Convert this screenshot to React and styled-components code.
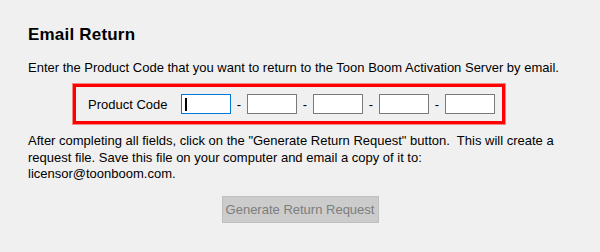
import React from "react";
import styled, { createGlobalStyle } from "styled-components";

const GlobalStyle = createGlobalStyle`
  html, body {
    margin: 0;
    padding: 0;
    background: #f0f0f0;
  }
  body {
    font-family: "Liberation Sans", Arial, sans-serif;
    color: #000;
  }
`;

const Page = styled.div`
  width: 600px;
  height: 252px;
  box-sizing: border-box;
  padding: 25px 0 0 28px;
  display: flex;
  flex-direction: column;
  align-items: flex-start;
`;

const Title = styled.h2`
  margin: 0;
  font-size: 17px;
  line-height: 20px;
  font-weight: bold;
  letter-spacing: 0.2px;
`;

const Text = styled.p`
  margin: ${({ $top }) => $top}px 0 0;
  font-size: 13px;
  line-height: ${({ $lh }) => $lh || 16}px;
  white-space: pre;
`;

const CodeBox = styled.div`
  margin: 8px 0 0 45px;
  width: 432px;
  height: 40px;
  box-sizing: border-box;
  border: 3px solid #ff0000;
  box-shadow: 0 0 0 1px rgba(255, 0, 0, 0.45);
  padding-left: 12px;
  display: flex;
  align-items: center;
`;

const Label = styled.span`
  width: 93px;
  font-size: 13px;
`;

const FieldWrap = styled.span`
  position: relative;
  display: flex;
`;

const Field = styled.input`
  width: 50px;
  height: 20px;
  box-sizing: border-box;
  margin: 0;
  padding: 0 3px;
  border: 1px solid ${({ $active }) => ($active ? "#0078d7" : "#7a7a7a")};
  background: #fff;
  outline: none;
  font: 13px "Liberation Sans", Arial, sans-serif;
`;

const Caret = styled.span`
  position: absolute;
  left: 4px;
  top: 4px;
  width: 2px;
  height: 13px;
  background: #000;
`;

const Dash = styled.span`
  width: 16px;
  text-align: center;
  font-size: 13px;
`;

const ButtonRow = styled.div`
  align-self: stretch;
  margin-left: -28px;
  margin-top: 13px;
  display: flex;
  justify-content: center;
`;

const Button = styled.button`
  width: 157px;
  height: 27px;
  box-sizing: border-box;
  background: #cccccc;
  border: 1px solid #bfbfbf;
  border-radius: 0;
  color: #7d7d7d;
  font: 13px "Liberation Sans", Arial, sans-serif;
  padding: 0;
`;

export default function App() {
  const fields = [0, 1, 2, 3, 4];
  return (
    <>
      <GlobalStyle />
      <Page>
        <Title>Email Return</Title>
        <Text $top={15}>
          Enter the Product Code that you want to return to the Toon Boom Activation Server by email.
        </Text>
        <CodeBox>
          <Label>Product Code</Label>
          {fields.map((i) => (
            <React.Fragment key={i}>
              {i > 0 && <Dash>-</Dash>}
              <FieldWrap>
                <Field $active={i === 0} readOnly />
                {i === 0 && <Caret />}
              </FieldWrap>
            </React.Fragment>
          ))}
        </CodeBox>
        <Text $top={9} $lh={16.5}>
          {'After completing all fields, click on the "Generate Return Request" button.  This will create a\nrequest file. Save this file on your computer and email a copy of it to:\nlicensor@toonboom.com.'}
        </Text>
        <ButtonRow>
          <Button disabled>Generate Return Request</Button>
        </ButtonRow>
      </Page>
    </>
  );
}
